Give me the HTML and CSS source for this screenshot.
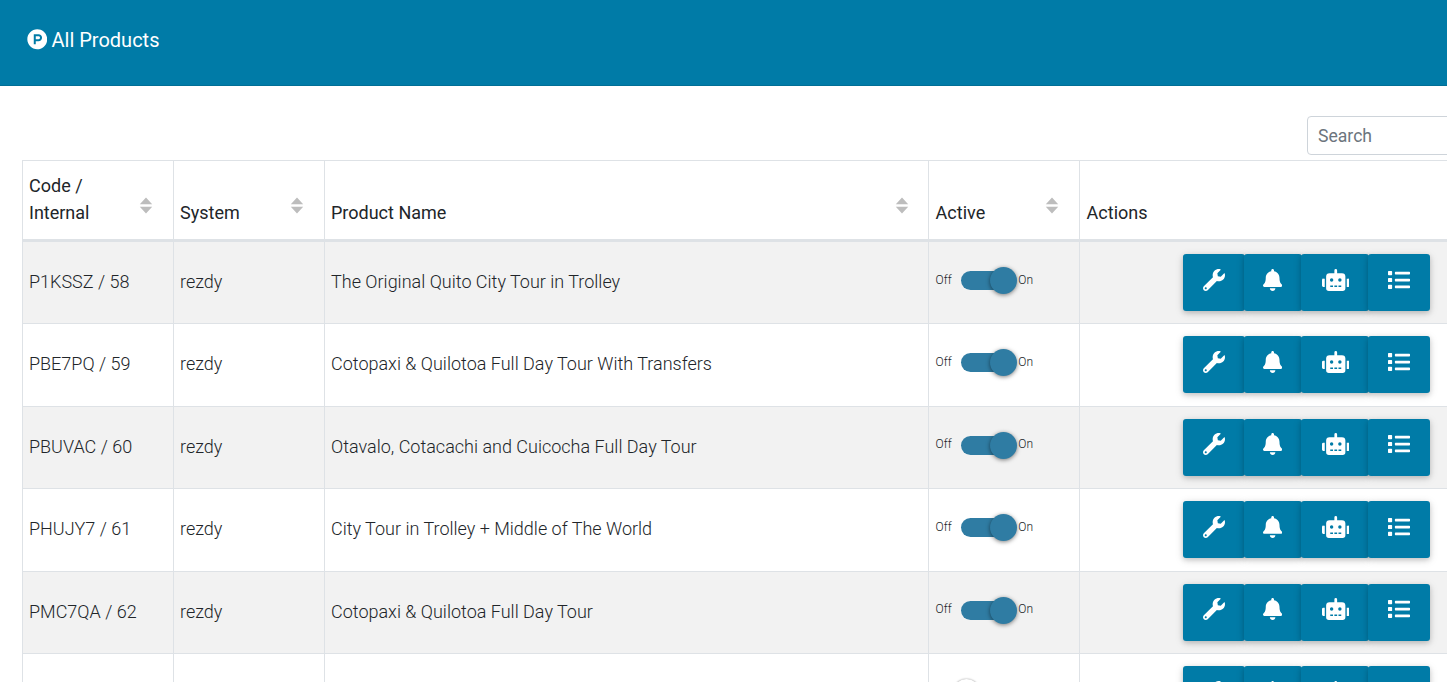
FILE: index.html
```html
<!DOCTYPE html>
<html lang="en">
<head>
<meta charset="utf-8">
<title>All Products</title>
<link rel="stylesheet" href="styles.css">
</head>
<body>
<svg class="sprites" width="0" height="0" aria-hidden="true">
  <symbol id="i-wrench" viewBox="0 0 512 512"><path d="M507.73 109.1c-2.24-9.03-13.54-12.09-20.12-5.51l-74.36 74.36-67.88-11.31-11.31-67.88 74.36-74.36c6.62-6.62 3.43-17.9-5.66-20.16-47.38-11.74-99.55.91-136.58 37.93-39.64 39.64-50.55 97.1-34.05 147.2L18.74 402.76c-24.99 24.99-24.99 65.51 0 90.5 24.99 24.99 65.51 24.99 90.5 0l213.21-213.21c50.12 16.71 107.47 5.68 147.37-34.22 37.07-37.07 49.7-89.32 37.91-136.73zM64 472c-13.25 0-24-10.75-24-24 0-13.26 10.75-24 24-24s24 10.74 24 24c0 13.25-10.75 24-24 24z"/></symbol>
  <symbol id="i-bell" viewBox="0 0 448 512"><path d="M224 512c35.32 0 63.97-28.65 63.97-64H160.03c0 35.35 28.65 64 63.97 64zm215.39-149.71c-19.32-20.76-55.47-51.99-55.47-154.29 0-77.7-54.48-139.9-127.94-155.16V32c0-17.67-14.32-32-31.98-32s-31.98 14.33-31.98 32v20.84C118.56 68.1 64.08 130.3 64.08 208c0 102.3-36.15 133.53-55.47 154.29-6 6.45-8.66 14.16-8.61 21.71.11 16.4 12.98 32 32.1 32h383.8c19.12 0 32-15.6 32.1-32 .05-7.55-2.61-15.27-8.61-21.71z"/></symbol>
  <symbol id="i-robot" viewBox="0 0 640 512"><path d="M32,224H64V416H32A31.96166,31.96166,0,0,1,0,384V256A31.96166,31.96166,0,0,1,32,224Zm512-48V448a64.06328,64.06328,0,0,1-64,64H160a64.06328,64.06328,0,0,1-64-64V176a79.974,79.974,0,0,1,80-80H288V32a32,32,0,0,1,64,0V96H464A79.974,79.974,0,0,1,544,176ZM264,256a40,40,0,1,0-40,40A39.997,39.997,0,0,0,264,256Zm-8,128H192v32h64Zm96,0H288v32h64ZM456,256a40,40,0,1,0-40,40A39.997,39.997,0,0,0,456,256Zm-8,128H384v32h64ZM640,256V384a31.96166,31.96166,0,0,1-32,32H576V224h32A31.96166,31.96166,0,0,1,640,256Z"/></symbol>
  <symbol id="i-list" viewBox="0 0 512 512"><path d="M80 368H16a16 16 0 0 0-16 16v64a16 16 0 0 0 16 16h64a16 16 0 0 0 16-16v-64a16 16 0 0 0-16-16zm0-320H16A16 16 0 0 0 0 64v64a16 16 0 0 0 16 16h64a16 16 0 0 0 16-16V64a16 16 0 0 0-16-16zm0 160H16a16 16 0 0 0-16 16v64a16 16 0 0 0 16 16h64a16 16 0 0 0 16-16v-64a16 16 0 0 0-16-16zm416 176H176a16 16 0 0 0-16 16v32a16 16 0 0 0 16 16h320a16 16 0 0 0 16-16v-32a16 16 0 0 0-16-16zm0-320H176a16 16 0 0 0-16 16v32a16 16 0 0 0 16 16h320a16 16 0 0 0 16-16V80a16 16 0 0 0-16-16zm0 160H176a16 16 0 0 0-16 16v32a16 16 0 0 0 16 16h320a16 16 0 0 0 16-16v-32a16 16 0 0 0-16-16z"/></symbol>
  <symbol id="i-sort" viewBox="0 0 14 17"><path d="M7 0.6 13.2 7.2H0.8zM7 16.4 0.8 9.8H13.2z"/></symbol>
</svg>

<header class="topbar">
  <svg class="logo" viewBox="0 0 512 512"><path d="M326.3 218.8c0 20.5-16.7 37.2-37.2 37.2h-70.3v-74.4h70.3c20.5 0 37.2 16.7 37.2 37.2zM504 256c0 137-111 248-248 248S8 393 8 256 119 8 256 8s248 111 248 248zm-128.1-37.2c0-47.9-38.9-86.8-86.8-86.8H169.2v248h49.6v-74.4h70.3c47.9 0 86.8-38.9 86.8-86.8z"/></svg>
  <h1 class="title">All Products</h1>
</header>

<main class="content">
  <div class="toolbar">
    <input class="search" type="text" placeholder="Search">
  </div>
  <table class="products">
    <colgroup>
      <col class="c-narrow"><col class="c-narrow"><col class="c-name"><col class="c-narrow"><col class="c-actions">
    </colgroup>
    <thead>
      <tr>
        <th class="sortable">Code /<br>Internal<svg class="sort"><use href="#i-sort"/></svg></th>
        <th class="sortable">System<svg class="sort"><use href="#i-sort"/></svg></th>
        <th class="sortable">Product Name<svg class="sort"><use href="#i-sort"/></svg></th>
        <th class="sortable">Active<svg class="sort"><use href="#i-sort"/></svg></th>
        <th>Actions</th>
      </tr>
    </thead>
    <tbody>
      <tr>
        <td>P1KSSZ / 58</td><td>rezdy</td><td>The Original Quito City Tour in Trolley</td>
        <td><div class="switch"><span class="lbl">Off</span><span class="track"><span class="knob"></span></span><span class="lbl">On</span></div></td>
        <td><div class="btns"><button class="btn"><svg class="ico w22"><use href="#i-wrench"/></svg></button><button class="btn btn-bell"><svg class="ico w19"><use href="#i-bell"/></svg></button><button class="btn btn-robot"><svg class="ico w27"><use href="#i-robot"/></svg></button><button class="btn"><svg class="ico w22"><use href="#i-list"/></svg></button></div></td>
      </tr>
      <tr>
        <td>PBE7PQ / 59</td><td>rezdy</td><td>Cotopaxi &amp; Quilotoa Full Day Tour With Transfers</td>
        <td><div class="switch"><span class="lbl">Off</span><span class="track"><span class="knob"></span></span><span class="lbl">On</span></div></td>
        <td><div class="btns"><button class="btn"><svg class="ico w22"><use href="#i-wrench"/></svg></button><button class="btn btn-bell"><svg class="ico w19"><use href="#i-bell"/></svg></button><button class="btn btn-robot"><svg class="ico w27"><use href="#i-robot"/></svg></button><button class="btn"><svg class="ico w22"><use href="#i-list"/></svg></button></div></td>
      </tr>
      <tr>
        <td>PBUVAC / 60</td><td>rezdy</td><td>Otavalo, Cotacachi and Cuicocha Full Day Tour</td>
        <td><div class="switch"><span class="lbl">Off</span><span class="track"><span class="knob"></span></span><span class="lbl">On</span></div></td>
        <td><div class="btns"><button class="btn"><svg class="ico w22"><use href="#i-wrench"/></svg></button><button class="btn btn-bell"><svg class="ico w19"><use href="#i-bell"/></svg></button><button class="btn btn-robot"><svg class="ico w27"><use href="#i-robot"/></svg></button><button class="btn"><svg class="ico w22"><use href="#i-list"/></svg></button></div></td>
      </tr>
      <tr>
        <td>PHUJY7 / 61</td><td>rezdy</td><td>City Tour in Trolley + Middle of The World</td>
        <td><div class="switch"><span class="lbl">Off</span><span class="track"><span class="knob"></span></span><span class="lbl">On</span></div></td>
        <td><div class="btns"><button class="btn"><svg class="ico w22"><use href="#i-wrench"/></svg></button><button class="btn btn-bell"><svg class="ico w19"><use href="#i-bell"/></svg></button><button class="btn btn-robot"><svg class="ico w27"><use href="#i-robot"/></svg></button><button class="btn"><svg class="ico w22"><use href="#i-list"/></svg></button></div></td>
      </tr>
      <tr>
        <td>PMC7QA / 62</td><td>rezdy</td><td>Cotopaxi &amp; Quilotoa Full Day Tour</td>
        <td><div class="switch"><span class="lbl">Off</span><span class="track"><span class="knob"></span></span><span class="lbl">On</span></div></td>
        <td><div class="btns"><button class="btn"><svg class="ico w22"><use href="#i-wrench"/></svg></button><button class="btn btn-bell"><svg class="ico w19"><use href="#i-bell"/></svg></button><button class="btn btn-robot"><svg class="ico w27"><use href="#i-robot"/></svg></button><button class="btn"><svg class="ico w22"><use href="#i-list"/></svg></button></div></td>
      </tr>
      <tr>
        <td></td><td></td><td></td>
        <td><div class="switch is-off"><span class="lbl">Off</span><span class="track"><span class="knob"></span></span><span class="lbl">On</span></div></td>
        <td><div class="btns"><button class="btn"><svg class="ico w22"><use href="#i-wrench"/></svg></button><button class="btn btn-bell"><svg class="ico w19"><use href="#i-bell"/></svg></button><button class="btn btn-robot"><svg class="ico w27"><use href="#i-robot"/></svg></button><button class="btn"><svg class="ico w22"><use href="#i-list"/></svg></button></div></td>
      </tr>
    </tbody>
  </table>
</main>
</body>
</html>
```

FILE: styles.css
```css
html, body {
  margin: 0;
  height: 682px;
  overflow: hidden;
  background: #fff;
}
body {
  font-family: Roboto, "Liberation Sans", sans-serif;
  font-size: 18px;
  line-height: 1.5;
  color: #212529;
}
.sprites { display: block; height: 0; }

.topbar {
  display: flex;
  align-items: center;
  height: 86px;
  box-sizing: border-box;
  padding: 0 0 6px 27px;
  background: #007ba7;
  border-bottom: 1px solid #006f96;
  color: #fff;
}
.logo { width: 20.5px; height: 20.5px; fill: #fff; margin-right: 4.5px; margin-left: -0.5px; }
.title { margin: 0; font-size: 20px; font-weight: 400; line-height: 1.2; }

.content { padding: 30px 0 0 22px; width: 1600px; }
.toolbar { padding-left: 1285px; height: 44px; }
.search {
  display: block;
  box-sizing: border-box;
  width: 220px;
  height: 39px;
  padding: 0 10px;
  border: 1px solid #ced4da;
  border-radius: 4px;
  font: 400 17.6px/1.5 Roboto, sans-serif;
  color: #495057;
}
.search::placeholder { color: #6c757d; opacity: 1; }

.products {
  border-collapse: collapse;
  table-layout: fixed;
  width: 1500px;
}
.c-narrow { width: 151px; }
.c-name { width: 604px; }
.c-actions { width: 443px; }

.products th, .products td {
  border: 1px solid #dee2e6;
  padding: 0 6.4px 0 6px;
}
.products th:nth-child(n+4), .products td:nth-child(n+4) { padding-left: 6.6px; }
.products th {
  position: relative;
  text-align: left;
  vertical-align: bottom;
  font-weight: 400;
  height: 79.8px;
  padding-bottom: 12.5px;
  box-sizing: border-box;
  border-bottom-width: 3px;
}
.products td {
  font-weight: 300;
  height: 79.45px;
  padding-bottom: 2px;
  vertical-align: middle;
}
.products tbody tr:nth-child(odd) td { background: #f2f2f2; }

.sort {
  position: absolute;
  right: 20px;
  top: 36px;
  width: 14px;
  height: 17px;
  fill: #bdbdbd;
}
.products th:nth-child(3) .sort { right: 19px; }

.switch {
  display: flex;
  align-items: center;
  font-size: 12px;
  line-height: 1;
  margin-top: -2px;
}
.lbl { display: block; margin-top: -2px; }
.track {
  position: relative;
  display: block;
  width: 43px;
  height: 19px;
  margin-left: 9.6px;
  border-radius: 10px;
  background: #2f7ca3;
}
.knob {
  position: absolute;
  right: -13px;
  top: -4px;
  width: 27px;
  height: 27px;
  border-radius: 50%;
  background: #2f7ca3;
  box-shadow: 0 1px 4px rgba(0, 0, 0, .5);
}
.track + .lbl { margin-left: 14px; }
.is-off .track { background: #ccc; }
.is-off .knob { right: auto; left: -8px; background: #fff; box-shadow: 0 0 2px rgba(0, 0, 0, .4); }

.btns {
  display: flex;
  justify-content: flex-end;
  width: 343.4px;
  margin-bottom: -2px;
}
.btn {
  display: flex;
  align-items: center;
  justify-content: center;
  box-sizing: border-box;
  height: 57px;
  padding: 0 20px 6px;
  margin-left: -1px;
  border: 0;
  border-radius: 3px;
  background: #007ba7;
  box-shadow: 0 2px 5px rgba(0, 0, 0, .16), 0 2px 10px rgba(0, 0, 0, .12);
}
.btn-bell { padding: 0 19.5px 6px; }
.btn-robot { padding: 0 19.5px 6px 21px; }
.ico { height: 22px; fill: #fff; display: block; }
.w22 { width: 22px; }
.w19 { width: 19.25px; }
.w27 { width: 27.5px; }
```
